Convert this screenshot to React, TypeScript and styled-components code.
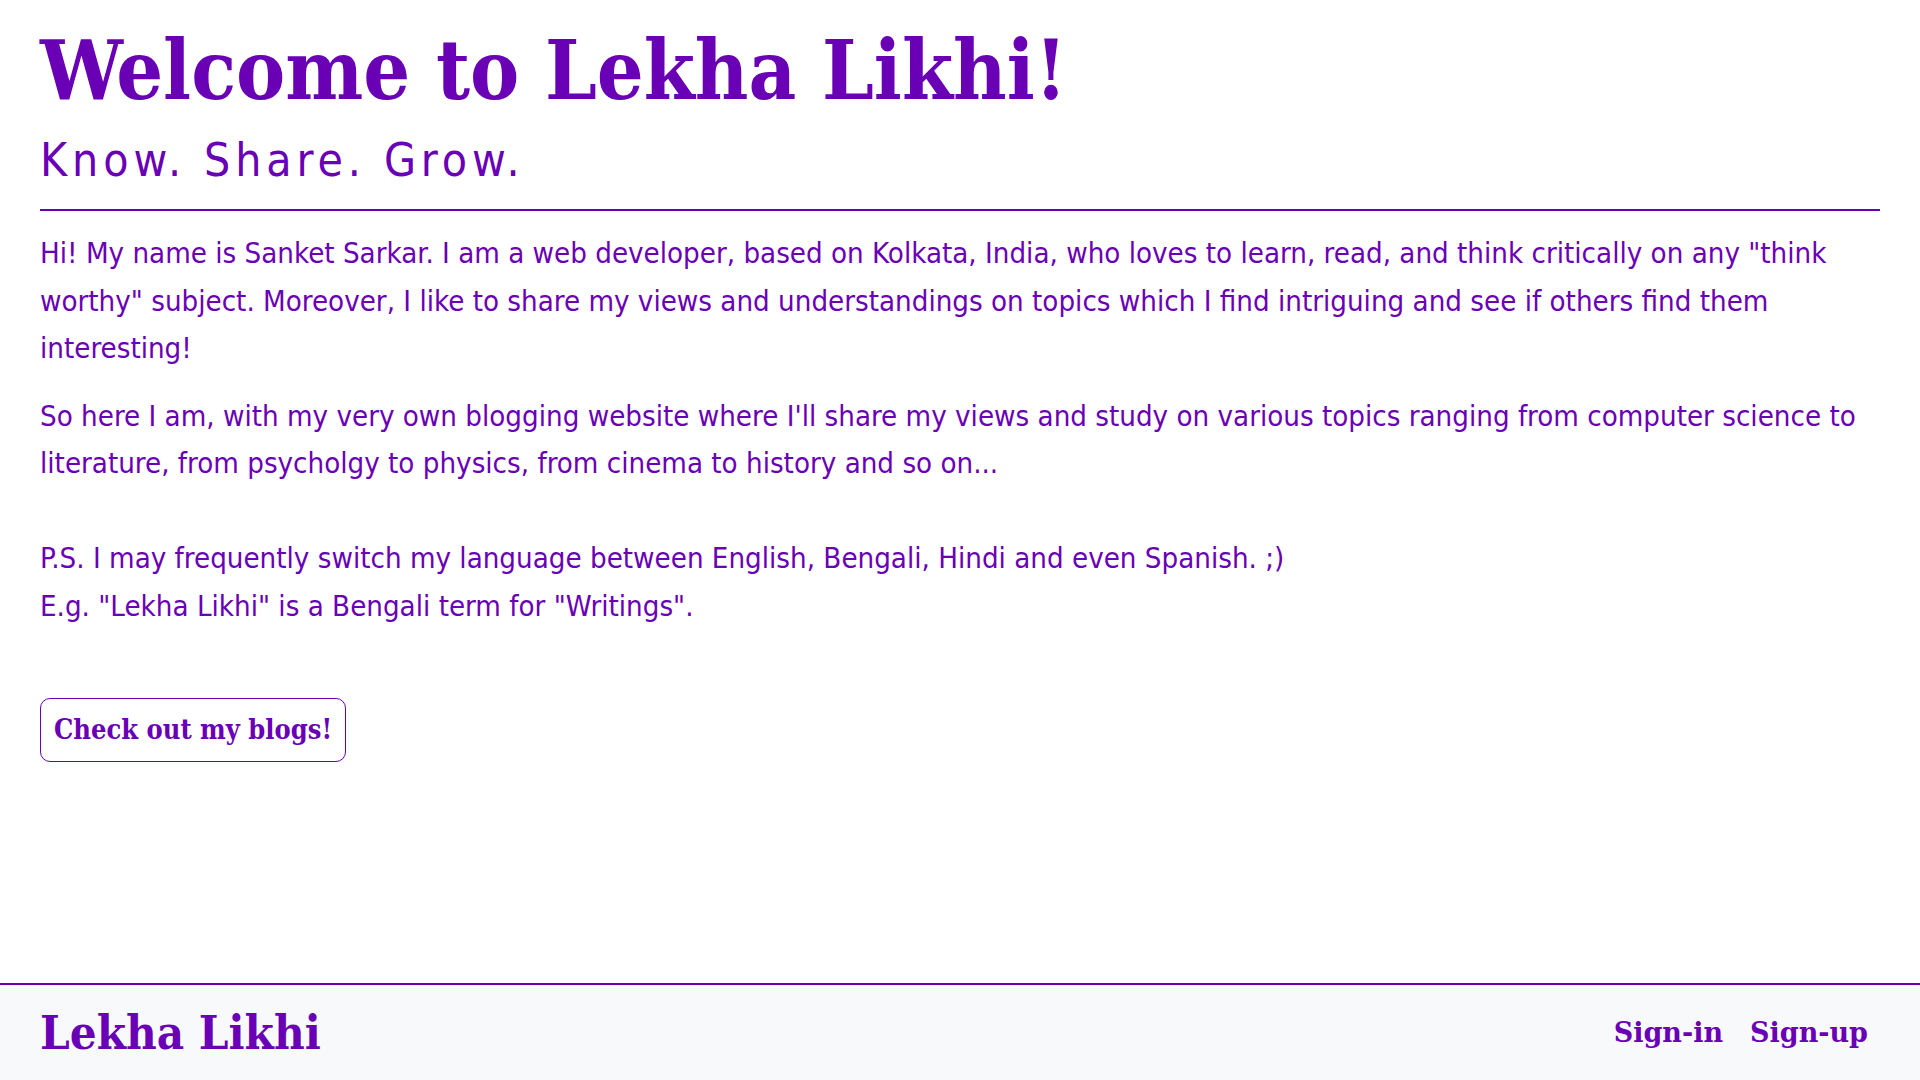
import React from 'react'
import styled, { createGlobalStyle } from 'styled-components'

const purple = '#6a00b6'

const GlobalStyle = createGlobalStyle`
    html, body {
        margin: 0;
        padding: 0;
        background: #ffffff;
    }
    #root {
        min-height: 100vh;
        display: flex;
        flex-direction: column;
    }
`

const App: React.FunctionComponent = () => (
    <>
        <GlobalStyle />
        <Page>
            <Main>
                <Title>Welcome to Lekha Likhi!</Title>
                <Tagline>Know. Share. Grow.</Tagline>
                <Divider />
                <Paragraph>
                    Hi! My name is Sanket Sarkar. I am a web developer, based on Kolkata, India, who loves to learn, read,
                    and think critically on any "think worthy" subject. Moreover, I like to share my views and
                    understandings on topics which I find intriguing and see if others find them interesting!
                </Paragraph>
                <Paragraph>
                    So here I am, with my very own blogging website where I'll share my views and study on various topics
                    ranging from computer science to literature, from psycholgy to physics, from cinema to history and so
                    on...
                    <br />
                    <br />
                    P.S. I may frequently switch my language between English, Bengali, Hindi and even Spanish. ;)
                    <br />
                    E.g. "Lekha Likhi" is a Bengali term for "Writings".
                </Paragraph>
                <BlogsButton>Check out my blogs!</BlogsButton>
            </Main>
            <Footer>
                <Brand>Lekha Likhi</Brand>
                <FooterLinks>
                    <FooterLink>Sign-in</FooterLink>
                    <FooterLink>Sign-up</FooterLink>
                </FooterLinks>
            </Footer>
        </Page>
    </>
)

export default App

const Page = styled.div`
    display: flex;
    flex-direction: column;
    flex: 1;
    min-height: 100vh;
    color: ${purple};
`

const Main = styled.main`
    flex: 1;
    display: flex;
    flex-direction: column;
    align-items: flex-start;
    padding: 22px 40px 0;
`

const Title = styled.h1`
    margin: 0;
    font-family: 'DejaVu Serif Condensed', 'DejaVu Serif', serif;
    font-weight: bold;
    font-size: 82px;
    line-height: 96px;
`

const Tagline = styled.h2`
    margin: 14px 0 0;
    font-family: 'DejaVu Sans Condensed', 'DejaVu Sans', sans-serif;
    font-weight: normal;
    font-size: 46px;
    line-height: 56px;
    letter-spacing: 4.9px;
`

const Divider = styled.hr`
    align-self: stretch;
    margin: 21px 0 19px;
    border: none;
    border-top: 2px solid ${purple};
`

const Paragraph = styled.p`
    margin: 0 0 20px;
    font-family: 'DejaVu Sans Condensed', 'DejaVu Sans', sans-serif;
    font-size: 29.2px;
    line-height: 47.5px;
`

const BlogsButton = styled.button`
    margin-top: 48px;
    padding: 11px 13px;
    background: #ffffff;
    color: ${purple};
    border: 1px solid ${purple};
    border-radius: 10px;
    font-family: 'DejaVu Serif Condensed', 'DejaVu Serif', serif;
    font-weight: bold;
    font-size: 27px;
    line-height: 40px;
    cursor: pointer;
`

const Footer = styled.footer`
    display: flex;
    align-items: center;
    justify-content: space-between;
    height: 95px;
    padding: 0 40px;
    background: #f8f9fa;
    border-top: 2px solid ${purple};
`

const Brand = styled.div`
    font-family: 'DejaVu Serif Condensed', 'DejaVu Serif', serif;
    font-weight: bold;
    font-size: 47px;
`

const FooterLinks = styled.nav`
    display: flex;
    gap: 27px;
    padding-right: 12px;
`

const FooterLink = styled.a`
    font-family: 'DejaVu Serif', serif;
    font-weight: bold;
    font-size: 27px;
    cursor: pointer;
`
